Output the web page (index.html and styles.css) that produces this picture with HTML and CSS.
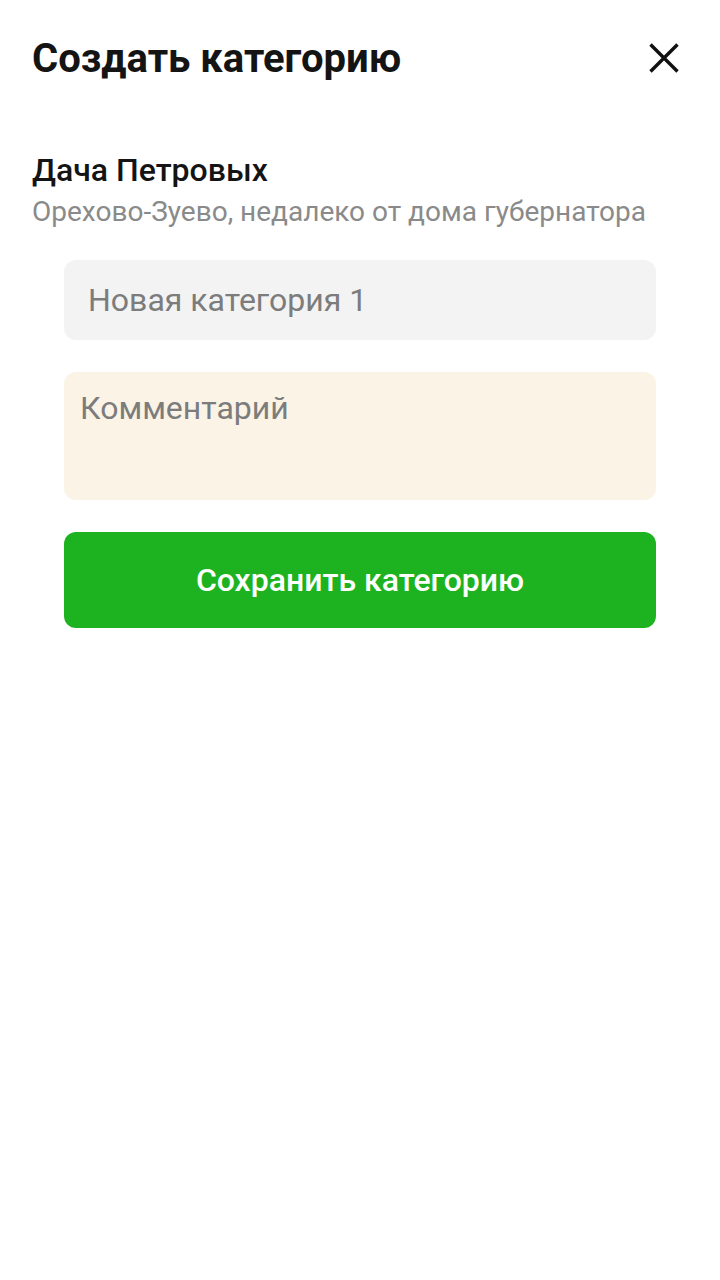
FILE: index.html
```html
<!DOCTYPE html>
<html lang="ru">
<head>
<meta charset="utf-8">
<link rel="stylesheet" href="styles.css">
</head>
<body>
<div class="screen">
  <header class="header">
    <h1 class="title">Создать категорию</h1>
    <button class="close" aria-label="Закрыть">
      <svg width="32" height="32" viewBox="0 0 32 32"><path d="M2.5 2.5 L29.5 29.5 M29.5 2.5 L2.5 29.5" stroke="#111" stroke-width="3.4" fill="none"/></svg>
    </button>
  </header>
  <section class="place">
    <div class="place-name">Дача Петровых</div>
    <div class="place-addr">Орехово-Зуево, недалеко от дома губернатора</div>
  </section>
  <form class="form">
    <div class="field field-name">Новая категория 1</div>
    <div class="field field-comment">Комментарий</div>
    <button type="button" class="save">Сохранить категорию</button>
  </form>
</div>
</body>
</html>
```
FILE: styles.css
```css
html, body { margin: 0; padding: 0; background: #fff; }
body { font-family: Roboto, "Noto Sans", sans-serif; }
.screen { width: 720px; height: 1280px; box-sizing: border-box; padding: 0 32px; }
.header { display: flex; align-items: center; justify-content: space-between; height: 118px; }
.title { margin: 0; font-size: 40px; font-weight: 700; color: #141414; line-height: 48px; }
.close { border: 0; background: none; padding: 0; margin-right: 8px; margin-bottom: 3px; width: 32px; height: 32px; display: flex; }
.place { padding-top: 33px; }
.place-name { font-size: 32px; font-weight: 500; color: #141414; line-height: 38px; }
.place-addr { font-size: 28px; color: #8a8a8a; line-height: 36px; margin-top: 5px; }
.form { display: flex; flex-direction: column; gap: 32px; padding: 30px 32px 0; }
.field { border-radius: 12px; font-size: 32px; color: #7c7c7c; box-sizing: border-box; }
.field-name { height: 80px; background: #f3f3f3; display: flex; align-items: center; padding-left: 24px; }
.field-comment { height: 128px; background: #faf3e6; padding: 16px 16px; line-height: 40px; }
.save { height: 96px; border: 0; border-radius: 12px; background: #1db320; color: #fff; font-family: Roboto, sans-serif; font-size: 32px; font-weight: 500; }
```
